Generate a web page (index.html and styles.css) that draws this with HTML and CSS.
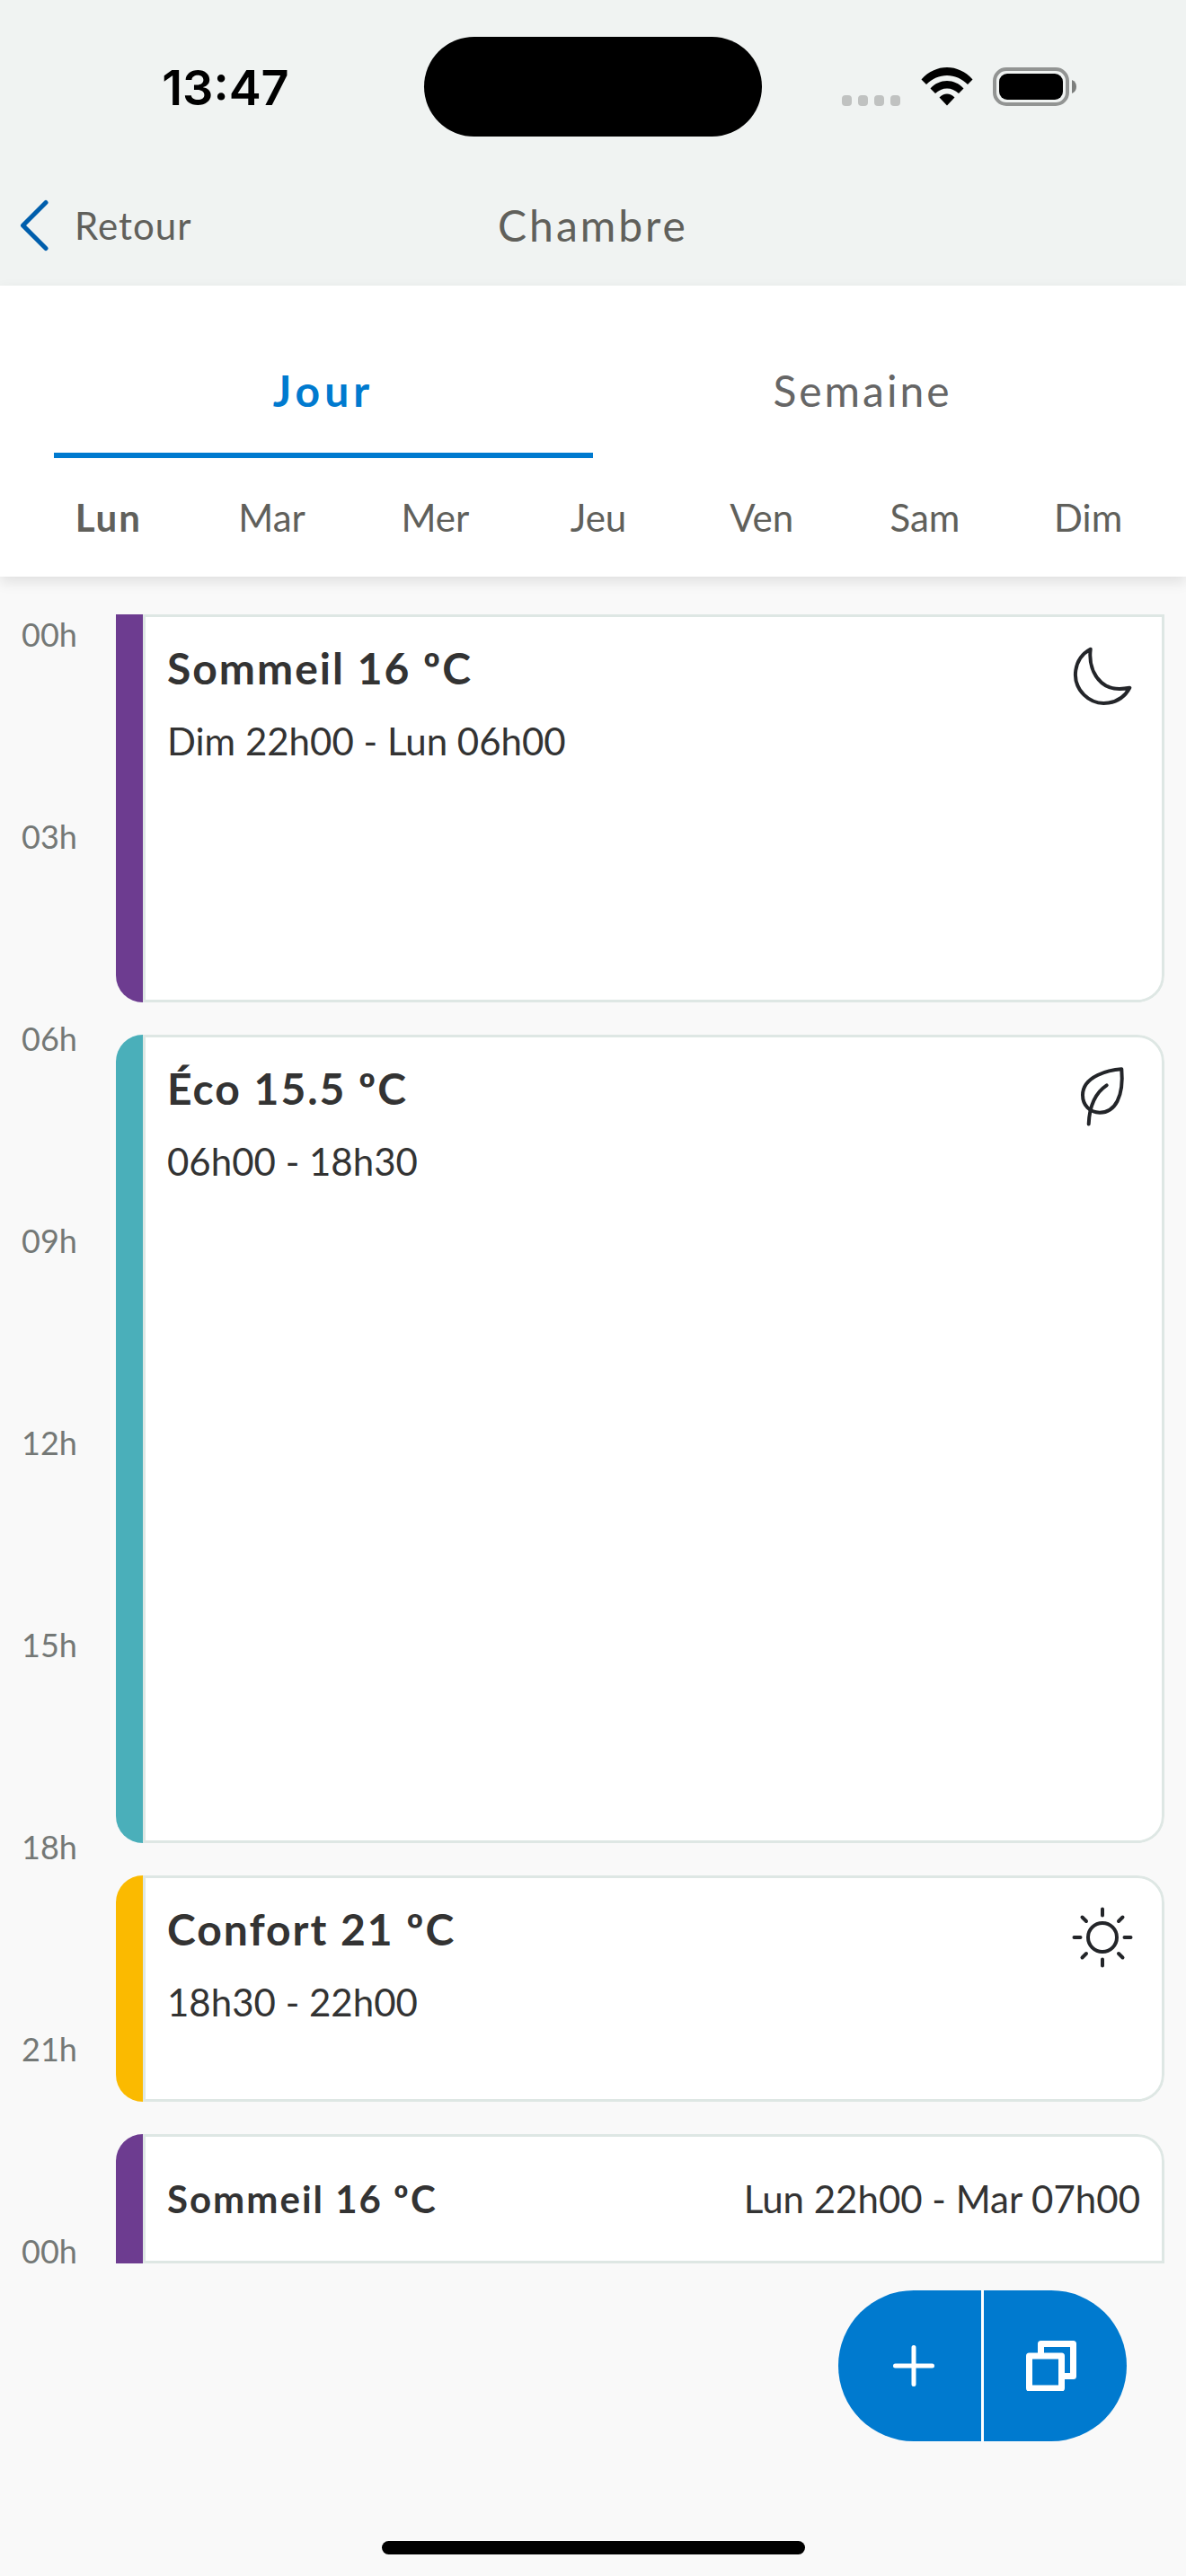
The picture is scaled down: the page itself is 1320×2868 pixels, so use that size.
FILE: index.html
```html
<!DOCTYPE html>
<html lang="fr">
<head>
    <meta charset="UTF-8">
    <meta name="viewport" content="width=device-width, initial-scale=1">
    <title>Chambre</title>
    <link rel="stylesheet" href="styles.css">
</head>
<body>
    <header class="header">
        <div class="status-bar">
            <span class="clock">13:47</span>
            <div class="island"></div>
            <div class="status-icons">
                <svg class="signal" width="66" height="12" viewBox="0 0 66 12">
                    <rect x="0" y="0" width="11" height="12" rx="4"/>
                    <rect x="18" y="0" width="11" height="12" rx="4"/>
                    <rect x="36" y="0" width="11" height="12" rx="4"/>
                    <rect x="54" y="0" width="11" height="12" rx="4"/>
                </svg>
                <svg class="wifi" width="58" height="43" viewBox="0 0 58 43">
                    <path d="M0.5 13.5 C16 -4.5 42 -4.5 57.5 13.5 L52 19 C39 5.5 19 5.5 6 19 Z"/>
                    <path d="M10.5 23.5 C20.5 12 37.5 12 47.5 23.5 L42 29 C34.5 21.5 23.5 21.5 16 29 Z"/>
                    <path d="M20.5 33.5 C25.5 28 32.5 28 37.5 33.5 L29 42.5 Z"/>
                </svg>
                <svg class="battery" width="94" height="43" viewBox="0 0 94 43">
                    <rect class="battery-case" x="2" y="2" width="81" height="39" rx="13"/>
                    <rect x="7" y="7" width="71" height="29" rx="9"/>
                    <path class="battery-tip" d="M88 14 C91.5 15.5 93 18 93 21.5 C93 25 91.5 27.5 88 29 Z"/>
                </svg>
            </div>
        </div>
        <nav class="nav-bar">
            <a class="back" href="#">
                <svg width="36" height="60" viewBox="0 0 36 60"><path d="M31 4.5 L5.5 30 L31 55.5"/></svg>
                Retour
            </a>
            <h1 class="page-title">Chambre</h1>
        </nav>
    </header>

    <section class="selector">
        <div class="tabs">
            <button class="tab active" type="button">Jour</button>
            <button class="tab" type="button">Semaine</button>
        </div>
        <div class="days">
            <button class="day active" type="button">Lun</button>
            <button class="day" type="button">Mar</button>
            <button class="day" type="button">Mer</button>
            <button class="day" type="button">Jeu</button>
            <button class="day" type="button">Ven</button>
            <button class="day" type="button">Sam</button>
            <button class="day" type="button">Dim</button>
        </div>
    </section>

    <main class="schedule">
        <ul class="hours">
            <li>00h</li>
            <li>03h</li>
            <li>06h</li>
            <li>09h</li>
            <li>12h</li>
            <li>15h</li>
            <li>18h</li>
            <li>21h</li>
            <li>00h</li>
        </ul>
        <div class="slots">
            <article class="slot sleep from-yesterday">
                <div class="slot-body">
                    <div>
                        <h2>Sommeil 16 ºC</h2>
                        <p>Dim 22h00 - Lun 06h00</p>
                    </div>
                    <svg class="slot-icon" width="72" height="72" viewBox="0 0 72 72">
                        <path d="M22.7 5.7 A32 32 0 1 0 66.3 48.7 C52 51.5 42 49.5 35 43 C25 34 21 20 22.7 5.7 Z"/>
                    </svg>
                </div>
            </article>
            <article class="slot eco">
                <div class="slot-body">
                    <div>
                        <h2>Éco 15.5 ºC</h2>
                        <p>06h00 - 18h30</p>
                    </div>
                    <svg class="slot-icon" width="72" height="72" viewBox="0 0 72 72">
                        <path d="M57.3 5.3 C44 6 14 13 14 34.3 C14 45.5 22 53.7 33 53.7 C50 53.7 60 36 57.3 5.3 Z"/>
                        <path d="M40.7 23.3 C29 31 21.5 46 20.7 66.5"/>
                    </svg>
                </div>
            </article>
            <article class="slot comfort">
                <div class="slot-body">
                    <div>
                        <h2>Confort 21 ºC</h2>
                        <p>18h30 - 22h00</p>
                    </div>
                    <svg class="slot-icon" width="72" height="72" viewBox="0 0 72 72">
                        <circle cx="36" cy="36" r="16"/>
                        <path d="M36 4.5 V11.5 M36 60.5 V67.5 M4.5 36 H11.5 M60.5 36 H67.5"/>
                        <path d="M13.5 13.5 L18 18 M54 54 L58.5 58.5 M58.5 13.5 L54 18 M18 54 L13.5 58.5"/>
                    </svg>
                </div>
            </article>
            <article class="slot sleep compact">
                <div class="slot-body">
                    <h2>Sommeil 16 ºC</h2>
                    <p>Lun 22h00 - Mar 07h00</p>
                </div>
            </article>
        </div>
    </main>

    <footer class="footer">
        <div class="actions">
            <button class="action add" type="button" aria-label="Ajouter">
                <svg width="48" height="48" viewBox="0 0 48 48"><path d="M24 3.5 V44.5 M3.5 24 H44.5"/></svg>
            </button>
            <button class="action copy" type="button" aria-label="Copier">
                <svg width="56" height="56" viewBox="0 0 56 56">
                    <rect x="3.5" y="17" width="36" height="36"/>
                    <path d="M16.5 15 V3.5 H52.5 V39.5 H41"/>
                </svg>
            </button>
        </div>
        <div class="home-bar"></div>
    </footer>
</body>
</html>
```
FILE: styles.css
```css
* {
    box-sizing: border-box;
}
body {
    margin: 0;
    background-color: #f9f9f9;
    font-family: Lato, sans-serif;
    font-size: 42px;
    line-height: 54px;
    color: #333;
}
h1, h2, p, ul {
    margin: 0;
    padding: 0;
}
button {
    font: inherit;
    color: inherit;
    background: none;
    border: none;
    padding: 0;
    cursor: pointer;
}
svg {
    display: block;
    flex: none;
}

/* Header */
.header {
    background-color: #f0f3f2;
    height: 318px;
}
.status-bar {
    display: grid;
    grid-template-columns: 1fr 376px 1fr;
    align-items: center;
    padding-top: 41px;
}
.clock {
    font-family: Inter, sans-serif;
    font-size: 54px;
    line-height: 60px;
    font-weight: 600;
    color: #000;
    padding: 2px 0 0 30px;
    text-align: center;
}
.island {
    height: 111px;
    border-radius: 56px;
    background: #000;
}
.status-icons {
    display: flex;
    align-items: flex-end;
    gap: 22px;
    padding-left: 89px;
}
.signal {
    fill: #c0c2c1;
}
.battery-case {
    fill: none;
    stroke: #929493;
    stroke-width: 4;
}
.battery-tip {
    fill: #7c7e7d;
}
.nav-bar {
    display: grid;
    grid-template-columns: 1fr auto 1fr;
    align-items: center;
    padding: 69px 20px 0;
}
.back {
    display: flex;
    align-items: center;
    gap: 27px;
    letter-spacing: 1px;
    color: #60605b;
    text-decoration: none;
}
.back svg {
    fill: none;
    stroke: #005eac;
    stroke-width: 5;
    stroke-linecap: round;
    stroke-linejoin: round;
}
.page-title {
    font-size: 48px;
    line-height: 60px;
    font-weight: 400;
    letter-spacing: 3px;
    color: #60605b;
}

/* Jour / Semaine and the days */
.selector {
    background-color: #fff;
    padding-top: 66px;
    box-shadow: 0 6px 14px rgba(0, 0, 0, 0.1);
}
.tabs {
    display: flex;
    padding: 0 60px;
}
.tab {
    flex: 1;
    height: 126px;
    padding-bottom: 18px;
    border-bottom: 6px solid transparent;
    font-size: 48px;
    letter-spacing: 3px;
    color: #666;
}
.tab.active {
    border-color: #007acf;
    color: #007acf;
    font-weight: 700;
    letter-spacing: 5px;
}
.days {
    display: grid;
    grid-template-columns: repeat(7, 1fr);
    padding: 0 18px 0 30px;
}
.day {
    height: 132px;
    color: #60605b;
}
.day.active {
    font-weight: 700;
    letter-spacing: 2px;
}

/* Schedule */
.schedule {
    display: flex;
    gap: 45px;
    padding: 42px 24px 0;
}
.hours {
    width: 60px;
    height: 1836px;
    list-style: none;
    font-size: 36px;
    line-height: 44px;
    color: #747876;
    text-align: right;
}
.hours li {
    height: 225px;
}
.hours li:last-child {
    height: 44px;
}
.slots {
    flex: 1;
    display: grid;
    grid-template-rows: 432px 900px 252px 144px;
    gap: 36px;
}
.slot {
    display: flex;
    border-radius: 30px;
    overflow: hidden;
}
.slot::before {
    content: "";
    width: 30px;
}
.slot-body {
    flex: 1;
    display: flex;
    justify-content: space-between;
    align-items: flex-start;
    background: #fff;
    border: 3px solid #dee7e4;
    border-radius: 0 30px 30px 0;
    padding: 27px 24px 0;
}
.sleep::before {
    background: #6d3c90;
}
.eco::before {
    background: #4aafba;
}
.comfort::before {
    background: #fbba00;
}
.from-yesterday {
    border-radius: 0 0 30px 30px;
}
.from-yesterday .slot-body {
    border-radius: 0 0 30px 0;
}
.slot h2 {
    font-size: 48px;
    line-height: 60px;
    font-weight: 700;
    letter-spacing: 2px;
    margin-bottom: 24px;
}
.slot-icon {
    margin: 3px 6px 0 0;
    fill: none;
    stroke: #232529;
    stroke-width: 4;
    stroke-linecap: round;
    stroke-linejoin: round;
}
.compact {
    border-radius: 30px 30px 0 0;
}
.compact .slot-body {
    align-items: center;
    border-radius: 0 30px 0 0;
    padding: 0 24px;
}
.compact h2 {
    font-size: 42px;
    margin: 0;
}

/* Footer */
.footer {
    padding: 30px 66px 24px;
}
.actions {
    display: flex;
    justify-content: flex-end;
    gap: 3px;
}
.action {
    width: 159px;
    height: 168px;
    display: flex;
    align-items: center;
    justify-content: center;
    background-color: #007acf;
}
.action svg {
    fill: none;
    stroke: #fff;
    stroke-width: 5;
    stroke-linecap: round;
    stroke-linejoin: round;
}
.add {
    border-radius: 84px 0 0 84px;
    padding-left: 9px;
    box-shadow: 3px 0 #fff;
}
.copy {
    border-radius: 0 84px 84px 0;
    padding-right: 9px;
}
.action.copy svg {
    stroke-width: 7;
    stroke-linecap: butt;
}
.home-bar {
    width: 471px;
    height: 15px;
    margin: 111px auto 0;
    border-radius: 8px;
    background: #000;
}
```
